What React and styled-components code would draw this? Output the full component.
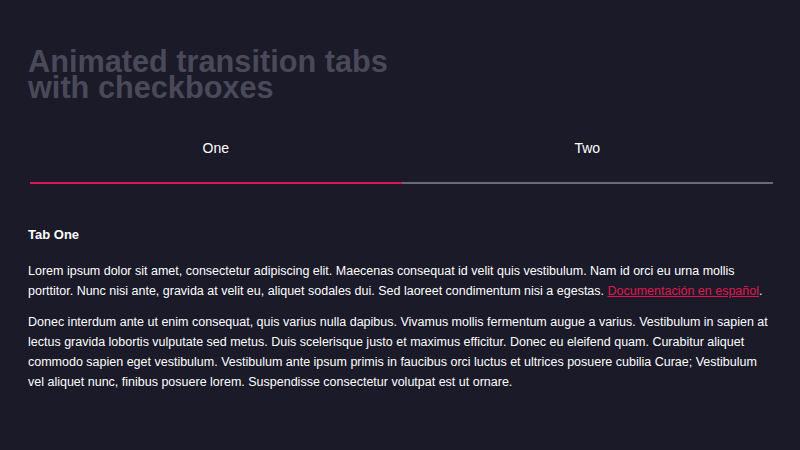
import React from 'react';
import styled, { createGlobalStyle } from 'styled-components';

const GlobalStyle = createGlobalStyle`
  html, body {
    margin: 0;
    padding: 0;
    background: #1a1a29;
  }
  body {
    font-family: "Liberation Sans", Arial, sans-serif;
    color: #fff;
  }
`;

function App() {
  const [active, setActive] = React.useState(0);
  const tabs = ['One', 'Two'];

  return (
    <Page>
      <GlobalStyle />
      <Title>Animated transition tabs<br />with checkboxes</Title>
      <Tabs>
        <TabRow>
          {tabs.map((t, i) => (
            <TabLabel key={t} $active={active === i} onClick={() => setActive(i)}>
              {t}
            </TabLabel>
          ))}
        </TabRow>
        <Track>
          <Indicator style={{ left: `${(active * 100) / tabs.length}%`, width: `${100 / tabs.length}%` }} />
        </Track>
      </Tabs>
      <Content>
        <h2>Tab {tabs[active]}</h2>
        <p>
          Lorem ipsum dolor sit amet, consectetur adipiscing elit. Maecenas consequat id velit quis vestibulum. Nam id orci eu urna mollis porttitor. Nunc nisi ante, gravida at velit eu, aliquet sodales dui. Sed laoreet condimentum nisi a egestas. <a href="#">Documentación en español</a>.
        </p>
        <p>
          Donec interdum ante ut enim consequat, quis varius nulla dapibus. Vivamus mollis fermentum augue a varius. Vestibulum in sapien at lectus gravida lobortis vulputate sed metus. Duis scelerisque justo et maximus efficitur. Donec eu eleifend quam. Curabitur aliquet commodo sapien eget vestibulum. Vestibulum ante ipsum primis in faucibus orci luctus et ultrices posuere cubilia Curae; Vestibulum vel aliquet nunc, finibus posuere lorem. Suspendisse consectetur volutpat est ut ornare.
        </p>
      </Content>
    </Page>
  );
}

const Page = styled.div`
  height: 450px;
  box-sizing: border-box;
  padding: 49px 27px 0 28px;
  background: #1a1a29;
  overflow: hidden;
`;

const Title = styled.h1`
  margin: 0;
  font-size: 30.7px;
  line-height: 26px;
  font-weight: 700;
  color: #4a4959;
`;

const Tabs = styled.div`
  margin: 23px 0 0 2px;
`;

const TabRow = styled.div`
  display: grid;
  grid-template-columns: 1fr 1fr;
`;

const TabLabel = styled.label`
  text-align: center;
  font-size: 14px;
  line-height: 16px;
  padding: 16px 0 26px;
  color: #fff;
  cursor: pointer;
`;

const Track = styled.div`
  position: relative;
  height: 2px;
  background: #6b6a78;
`;

const Indicator = styled.div`
  position: absolute;
  top: 0;
  height: 2px;
  background: #e0174f;
  transition: left 0.3s ease;
`;

const Content = styled.div`
  padding-top: 43px;

  h2 {
    margin: 0 0 19px;
    font-size: 13px;
    line-height: 16px;
    font-weight: 700;
  }

  p {
    margin: 0 0 12px;
    font-size: 12.5px;
    line-height: 19.7px;
  }

  a {
    color: #e0174f;
    text-decoration: underline;
  }
`;

export default App;
